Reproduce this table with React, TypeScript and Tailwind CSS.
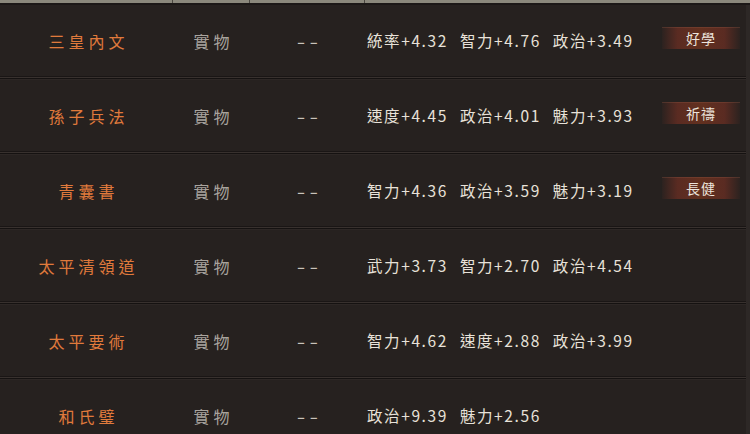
import React from "react";

interface Treasure {
  name: string;
  kind: string;
  extra: string;
  stats: string[];
  skill?: string;
}

const items: Treasure[] = [
  { name: "三皇內文", kind: "實物", extra: "--", stats: ["統率+4.32", "智力+4.76", "政治+3.49"], skill: "好學" },
  { name: "孫子兵法", kind: "實物", extra: "--", stats: ["速度+4.45", "政治+4.01", "魅力+3.93"], skill: "祈禱" },
  { name: "青囊書", kind: "實物", extra: "--", stats: ["智力+4.36", "政治+3.59", "魅力+3.19"], skill: "長健" },
  { name: "太平清領道", kind: "實物", extra: "--", stats: ["武力+3.73", "智力+2.70", "政治+4.54"] },
  { name: "太平要術", kind: "實物", extra: "--", stats: ["智力+4.62", "速度+2.88", "政治+3.99"] },
  { name: "和氏璧", kind: "實物", extra: "--", stats: ["政治+9.39", "魅力+2.56"] },
];

const font = "font-['Noto_Sans_CJK_TC','Noto_Sans',sans-serif]";

const Row = ({ item }: { item: Treasure }) => (
  <div className="flex flex-col">
    <div className="h-[71px] grid grid-cols-[173px_77px_115px_1fr_88px] items-center bg-[#26211f]">
      <div className="text-center text-[16px] tracking-[4px] pl-[4px] text-[#e07a3c]">{item.name}</div>
      <div className="text-center text-[16px] tracking-[4px] pl-[4px] text-[#a9a49e]">{item.kind}</div>
      <div className="flex justify-center">
        <span className="inline-block scale-x-[1.45] text-[17px] tracking-[3px] pl-[3px] text-[#c9c3bb]">
          {item.extra}
        </span>
      </div>
      <div className="flex gap-[12px] pl-[2px] text-[15.5px] text-[#e8e2d9]">
        {item.stats.map((s) => (
          <span key={s} className="tracking-[1.6px]">{s}</span>
        ))}
      </div>
      <div className="flex items-center pl-[4px]">
        {item.skill && (
          <div className="h-[22px] w-[78px] -mt-[5px] flex items-center justify-center text-[14px] tracking-[1px] text-[#ece4dc] bg-[linear-gradient(90deg,rgba(94,45,36,0.1),#5a2b22_20%,#62301f_50%,#5a2b22_80%,rgba(94,45,36,0.1))] shadow-[inset_0_1px_0_rgba(150,90,70,0.3)]">
            {item.skill}
          </div>
        )}
      </div>
    </div>
    <div className="h-[4px] flex flex-col">
      <div className="h-[1px] bg-[#1a1615]" />
      <div className="h-[1px] bg-[#38312e]" />
      <div className="h-[1px] bg-[#151211]" />
      <div className="h-[1px] bg-[#2d2725]" />
    </div>
  </div>
);

export default function App() {
  return (
    <div className={`w-[750px] h-[434px] overflow-hidden bg-[#221e1c] ${font}`}>
      <div className="h-[3px] flex bg-[#8b887c]">
        <div className="w-[173px] border-r border-[#4a4740]" />
        <div className="w-[77px] border-r border-[#4a4740]" />
        <div className="w-[115px] border-r border-[#4a4740]" />
        <div className="flex-1" />
      </div>
      <div className="h-[2px] bg-[#1c1817]" />
      <div className="flex flex-col pr-[4px] bg-[#2d2826]">
        {items.map((it) => (
          <Row key={it.name} item={it} />
        ))}
      </div>
    </div>
  );
}
